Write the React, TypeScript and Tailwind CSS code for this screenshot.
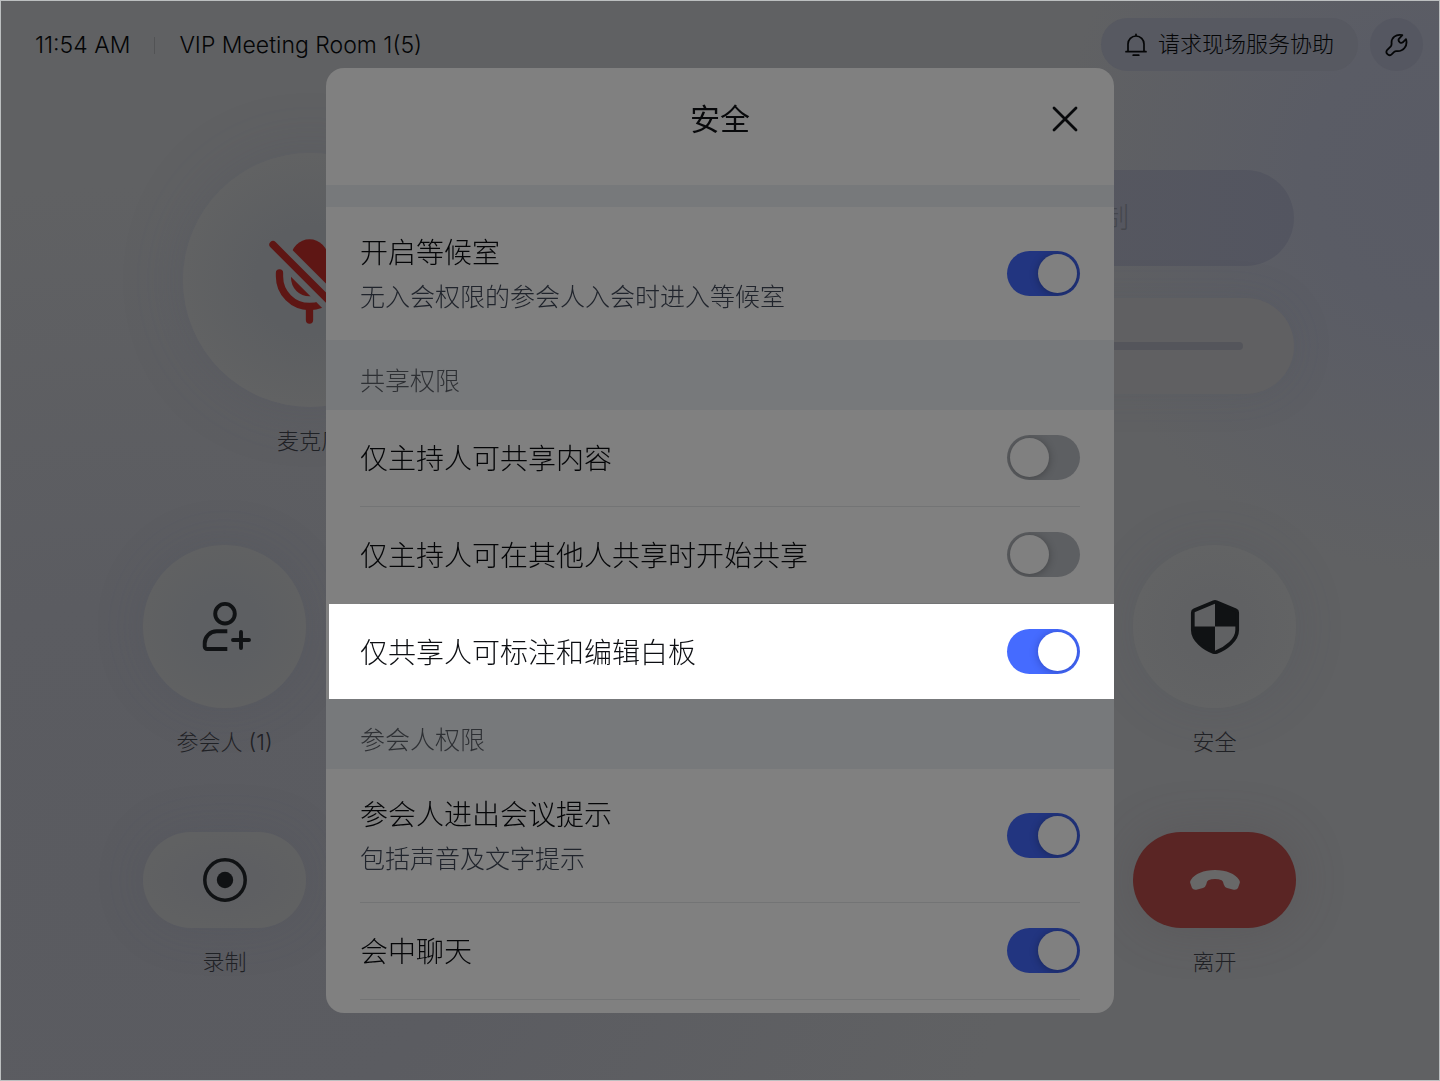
import React, { useState } from 'react';

function BellIcon() {
  return (
    <svg viewBox="0 0 22 24" fill="none" stroke="currentColor" strokeWidth="1.7" strokeLinecap="round" className="h-6 w-[22px]">
      <path d="M3 18.7V11a8 8 0 0 1 16 0v7.7M1 18.7h20M8.2 22.2h5.6M11 1.3v1.4" />
    </svg>
  );
}

function WrenchIcon() {
  return (
    <svg viewBox="0 0 24 24" fill="none" stroke="currentColor" strokeWidth="1.8" strokeLinejoin="round" className="size-6">
      <path d="M17.3 2.2C11 .5 6 5 6.6 10.5Q6.7 12.3 5.8 13.3L2.3 16.8C-.3 20 3.8 23.8 6.6 21.3L9.2 18.8Q10.2 17.9 11.8 18.1C18.5 18.6 23 12.5 21 6.2L17.8 9.3Q16.5 10.3 15 9.4Q13 8 13.7 6.2Z" />
    </svg>
  );
}

function MicOffIcon() {
  return (
    <svg viewBox="0 0 90 90" className="size-[90px] text-[#5e1614]" fill="none" stroke="currentColor" strokeWidth="7.3" strokeLinecap="round">
      <mask id="mic-gap" maskUnits="userSpaceOnUse" x="0" y="0" width="90" height="90">
        <rect width="90" height="90" fill="#fff" stroke="none" />
        <path d="M-10 -8.3 100 101.7" stroke="#000" strokeWidth="20" />
      </mask>
      <g mask="url(#mic-gap)">
        <rect x="26" y="4.3" width="37" height="57" rx="18.5" fill="currentColor" stroke="none" />
        <path d="M14.5 38v3.5a30 30 0 0 0 60 0V38" />
      </g>
      <path d="M44.5 72V85M8 9.7l72 72" />
    </svg>
  );
}

function AddUserIcon() {
  return (
    <svg viewBox="0 0 60 60" className="size-[60px]" fill="none" stroke="currentColor" strokeWidth="3.9">
      <circle cx="30" cy="16.7" r="9.8" />
      <path d="M32.3 34.3H21.7a12 12 0 0 0-12 12v3.2a2.5 2.5 0 0 0 2.5 2.5h20.1" />
      <path d="M38 43h16M46 35v16" strokeLinecap="round" />
    </svg>
  );
}

function RecordIcon() {
  return (
    <svg viewBox="0 0 44 44" className="size-11" fill="none" stroke="currentColor" strokeWidth="3.5">
      <circle cx="22" cy="22" r="20.2" />
      <circle cx="22" cy="22" r="8.2" fill="currentColor" stroke="none" />
    </svg>
  );
}

function ShieldIcon() {
  const outline =
    'M28.6 5.2Q30 4.6 31.4 5.2L50.6 13.2Q52.2 13.9 52.2 15.6V33C52.2 43 41 51.5 31.6 55Q30 55.5 28.4 55C19 51.5 7.8 43 7.8 33V15.6Q7.8 13.9 9.4 13.2Z';
  return (
    <svg viewBox="0 0 60 60" className="size-[60px]" fill="none">
      <clipPath id="shield-shape">
        <path d={outline} />
      </clipPath>
      <path d="M30 0h30v29.5H30zM0 29.5h30V60H0z" fill="currentColor" clipPath="url(#shield-shape)" />
      <path d={outline} stroke="currentColor" strokeWidth="3.7" />
    </svg>
  );
}

function HangUpIcon() {
  return (
    <svg viewBox="0 0 150 60" className="h-5 w-[50px]" fill="currentColor">
      <path d="M75 0C110 0 135 12 147 29Q151 34 149 40L144 54Q140 61 131 59L111 54Q103 51 101 43Q100 34 95 31Q86 27 75 27Q64 27 55 31Q50 34 49 43Q47 51 39 54L19 59Q10 61 6 54L1 40Q-1 34 3 29C15 12 40 0 75 0Z" />
    </svg>
  );
}

function CloseIcon() {
  return (
    <svg viewBox="0 0 30 30" className="size-[30px]" fill="none" stroke="currentColor" strokeWidth="2.8" strokeLinecap="round">
      <path d="M4 4l22 22M26 4 4 26" />
    </svg>
  );
}

function Tile({ label, shape, icon }: { label: string; shape: string; icon: React.ReactNode }) {
  return (
    <button type="button" className="flex flex-col items-center gap-[18px] text-[22px] leading-8 text-[#1f2125]">
      <span className={`flex items-center justify-center rounded-full ${shape}`}>{icon}</span>
      {label}
    </button>
  );
}

function Section({ title }: { title: string }) {
  return <h3 className="bg-[#77797b] px-[34px] pt-[22px] pb-[10px] text-[25px] leading-[38px] text-[#2e3034]">{title}</h3>;
}

type RowProps = { id: string; title: string; note?: string; on?: boolean; divider?: boolean; highlight?: boolean };

function Row({ id, title, note, on = false, divider = false, highlight = false }: RowProps) {
  const [checked, setChecked] = useState(on);
  return (
    <div className={highlight ? 'ml-[3px] bg-white pr-[34px] pl-[31px]' : 'px-[34px]'}>
      <div
        className={`flex items-center justify-between ${note ? 'pt-[21px] pb-[22px]' : highlight ? 'py-6' : 'pt-6 pb-[25px]'} ${
          divider ? 'border-b border-[#737475]' : ''
        }`}
      >
        <label htmlFor={id} className="flex flex-col pt-[3px]">
          <span className={`text-[28px] ${note ? 'leading-[45px]' : 'leading-[44px]'} ${highlight ? 'text-[#0c0e12]' : 'text-[#040507]'}`}>{title}</span>
          {note && <span className="text-[25px] leading-[42px] text-[#20242c]">{note}</span>}
        </label>
        <input
          id={id}
          type="checkbox"
          role="switch"
          checked={checked}
          onChange={(e) => setChecked(e.target.checked)}
          className={`flex h-[45px] w-[73px] shrink-0 cursor-pointer appearance-none items-center overflow-hidden rounded-full px-[3px] before:size-[39px] before:rounded-full before:content-[''] checked:justify-end ${
            highlight
              ? 'bg-[#bbbfc4] before:bg-white before:shadow-[0_1px_8px_rgba(0,0,60,0.3)] checked:bg-[#456bff]'
              : 'bg-[#5d5f62] before:bg-[#808080] before:shadow-[0_1px_8px_rgba(0,0,0,0.3)] checked:bg-[#223580]'
          }`}
        />
      </div>
    </div>
  );
}

export default function App() {
  return (
    <div className="relative min-h-screen overflow-hidden border border-[#bcbfc0] bg-[#606163] bg-[radial-gradient(ellipse_380px_400px_at_100%_16%,#595b65_0%,#5a5c65_35%,transparent_100%),radial-gradient(ellipse_900px_700px_at_8%_82%,#5a5b60_0%,#5b5c61_40%,transparent_100%)] font-['Inter','Noto_Sans_CJK_SC',sans-serif] font-light">
      <header className="flex items-center justify-between pt-[17px] pr-4 pl-[34px] text-[22px] text-[#040506]">
        <div className="flex items-center pt-0.5 text-[23px]">
          <time>11:54 AM</time>
          <span className="ml-6 h-[17px] w-px bg-[#525355]" />
          <h1 className="ml-6">VIP Meeting Room 1(5)</h1>
        </div>
        <div className="flex items-center gap-3">
          <button type="button" className="flex h-[53px] items-center gap-[11px] rounded-full bg-[#575961] px-6">
            <BellIcon />
            请求现场服务协助
          </button>
          <button type="button" aria-label="设置" className="flex size-[53px] items-center justify-center rounded-full bg-[#555761]">
            <WrenchIcon />
          </button>
        </div>
      </header>

      <main className="flex flex-col pt-[82px] pr-[143px] pl-[142px]">
        <div className="flex items-start justify-between pr-0.5 pl-10">
          <Tile
            label="麦克风"
            shape="size-[254px] bg-[radial-gradient(circle,#5c5e61_30%,#616263_70%)] shadow-[0_0_60px_rgba(70,74,90,0.25)]"
            icon={<MicOffIcon />}
          />
          <div className="flex w-[386px] flex-col gap-8 pt-[17px]">
            <button type="button" className="h-24 rounded-full bg-linear-to-r from-[#58595f] to-[#535560] text-[28px] text-[#45474d]">
              控制
            </button>
            <div className="flex h-24 items-center rounded-full bg-[#606062] px-[51px] shadow-[0_0_40px_rgba(70,74,90,0.15)]">
              <input type="range" aria-label="音量" defaultValue="0" className="h-2 w-full appearance-none rounded-full bg-[#54555b]" />
            </div>
          </div>
        </div>

        <div className="mt-[88px] flex justify-between">
          <Tile
            label="参会人 (1)"
            shape="size-[163px] bg-[radial-gradient(circle,#5d5f62_30%,#606162_70%)] text-[#101214] shadow-[0_0_50px_rgba(70,74,90,0.2)]"
            icon={<AddUserIcon />}
          />
          <Tile
            label="安全"
            shape="size-[163px] bg-[radial-gradient(circle,#606163_30%,#626364_70%)] text-[#101214] shadow-[0_0_50px_rgba(70,74,90,0.2)]"
            icon={<ShieldIcon />}
          />
        </div>

        <div className="mt-[74px] flex justify-between">
          <Tile
            label="录制"
            shape="h-24 w-[163px] bg-[radial-gradient(ellipse,#5e5f62_30%,#606162_70%)] text-[#101214] shadow-[0_0_50px_rgba(70,74,90,0.2)]"
            icon={<RecordIcon />}
          />
          <Tile
            label="离开"
            shape="h-24 w-[163px] bg-[#5a2524] text-[#686868] shadow-[0_0_50px_rgba(80,70,72,0.3)]"
            icon={<HangUpIcon />}
          />
        </div>
      </main>

      <div className="fixed inset-0 flex items-center justify-center">
        <section role="dialog" aria-labelledby="dialog-title" className="w-full max-w-[788px] overflow-hidden rounded-[18px] bg-[#808080] pb-[13px]">
          <div className="grid grid-cols-[1fr_auto_1fr] items-center px-[34px] pt-[31px] pb-[46px]">
            <h2 id="dialog-title" className="col-start-2 text-[30px] leading-10 font-normal text-[#08090b]">
              安全
            </h2>
            <button type="button" aria-label="关闭" className="justify-self-end text-[#08090b]">
              <CloseIcon />
            </button>
          </div>
          <div className="h-[22px] bg-[#77797b]" />
          <Row id="waiting-room" title="开启等候室" note="无入会权限的参会人入会时进入等候室" on />
          <Section title="共享权限" />
          <Row id="host-share" title="仅主持人可共享内容" divider />
          <Row id="host-take-over" title="仅主持人可在其他人共享时开始共享" divider />
          <Row id="annotate" title="仅共享人可标注和编辑白板" on highlight />
          <Section title="参会人权限" />
          <Row id="join-alert" title="参会人进出会议提示" note="包括声音及文字提示" on divider />
          <Row id="chat" title="会中聊天" on divider />
        </section>
      </div>
    </div>
  );
}
